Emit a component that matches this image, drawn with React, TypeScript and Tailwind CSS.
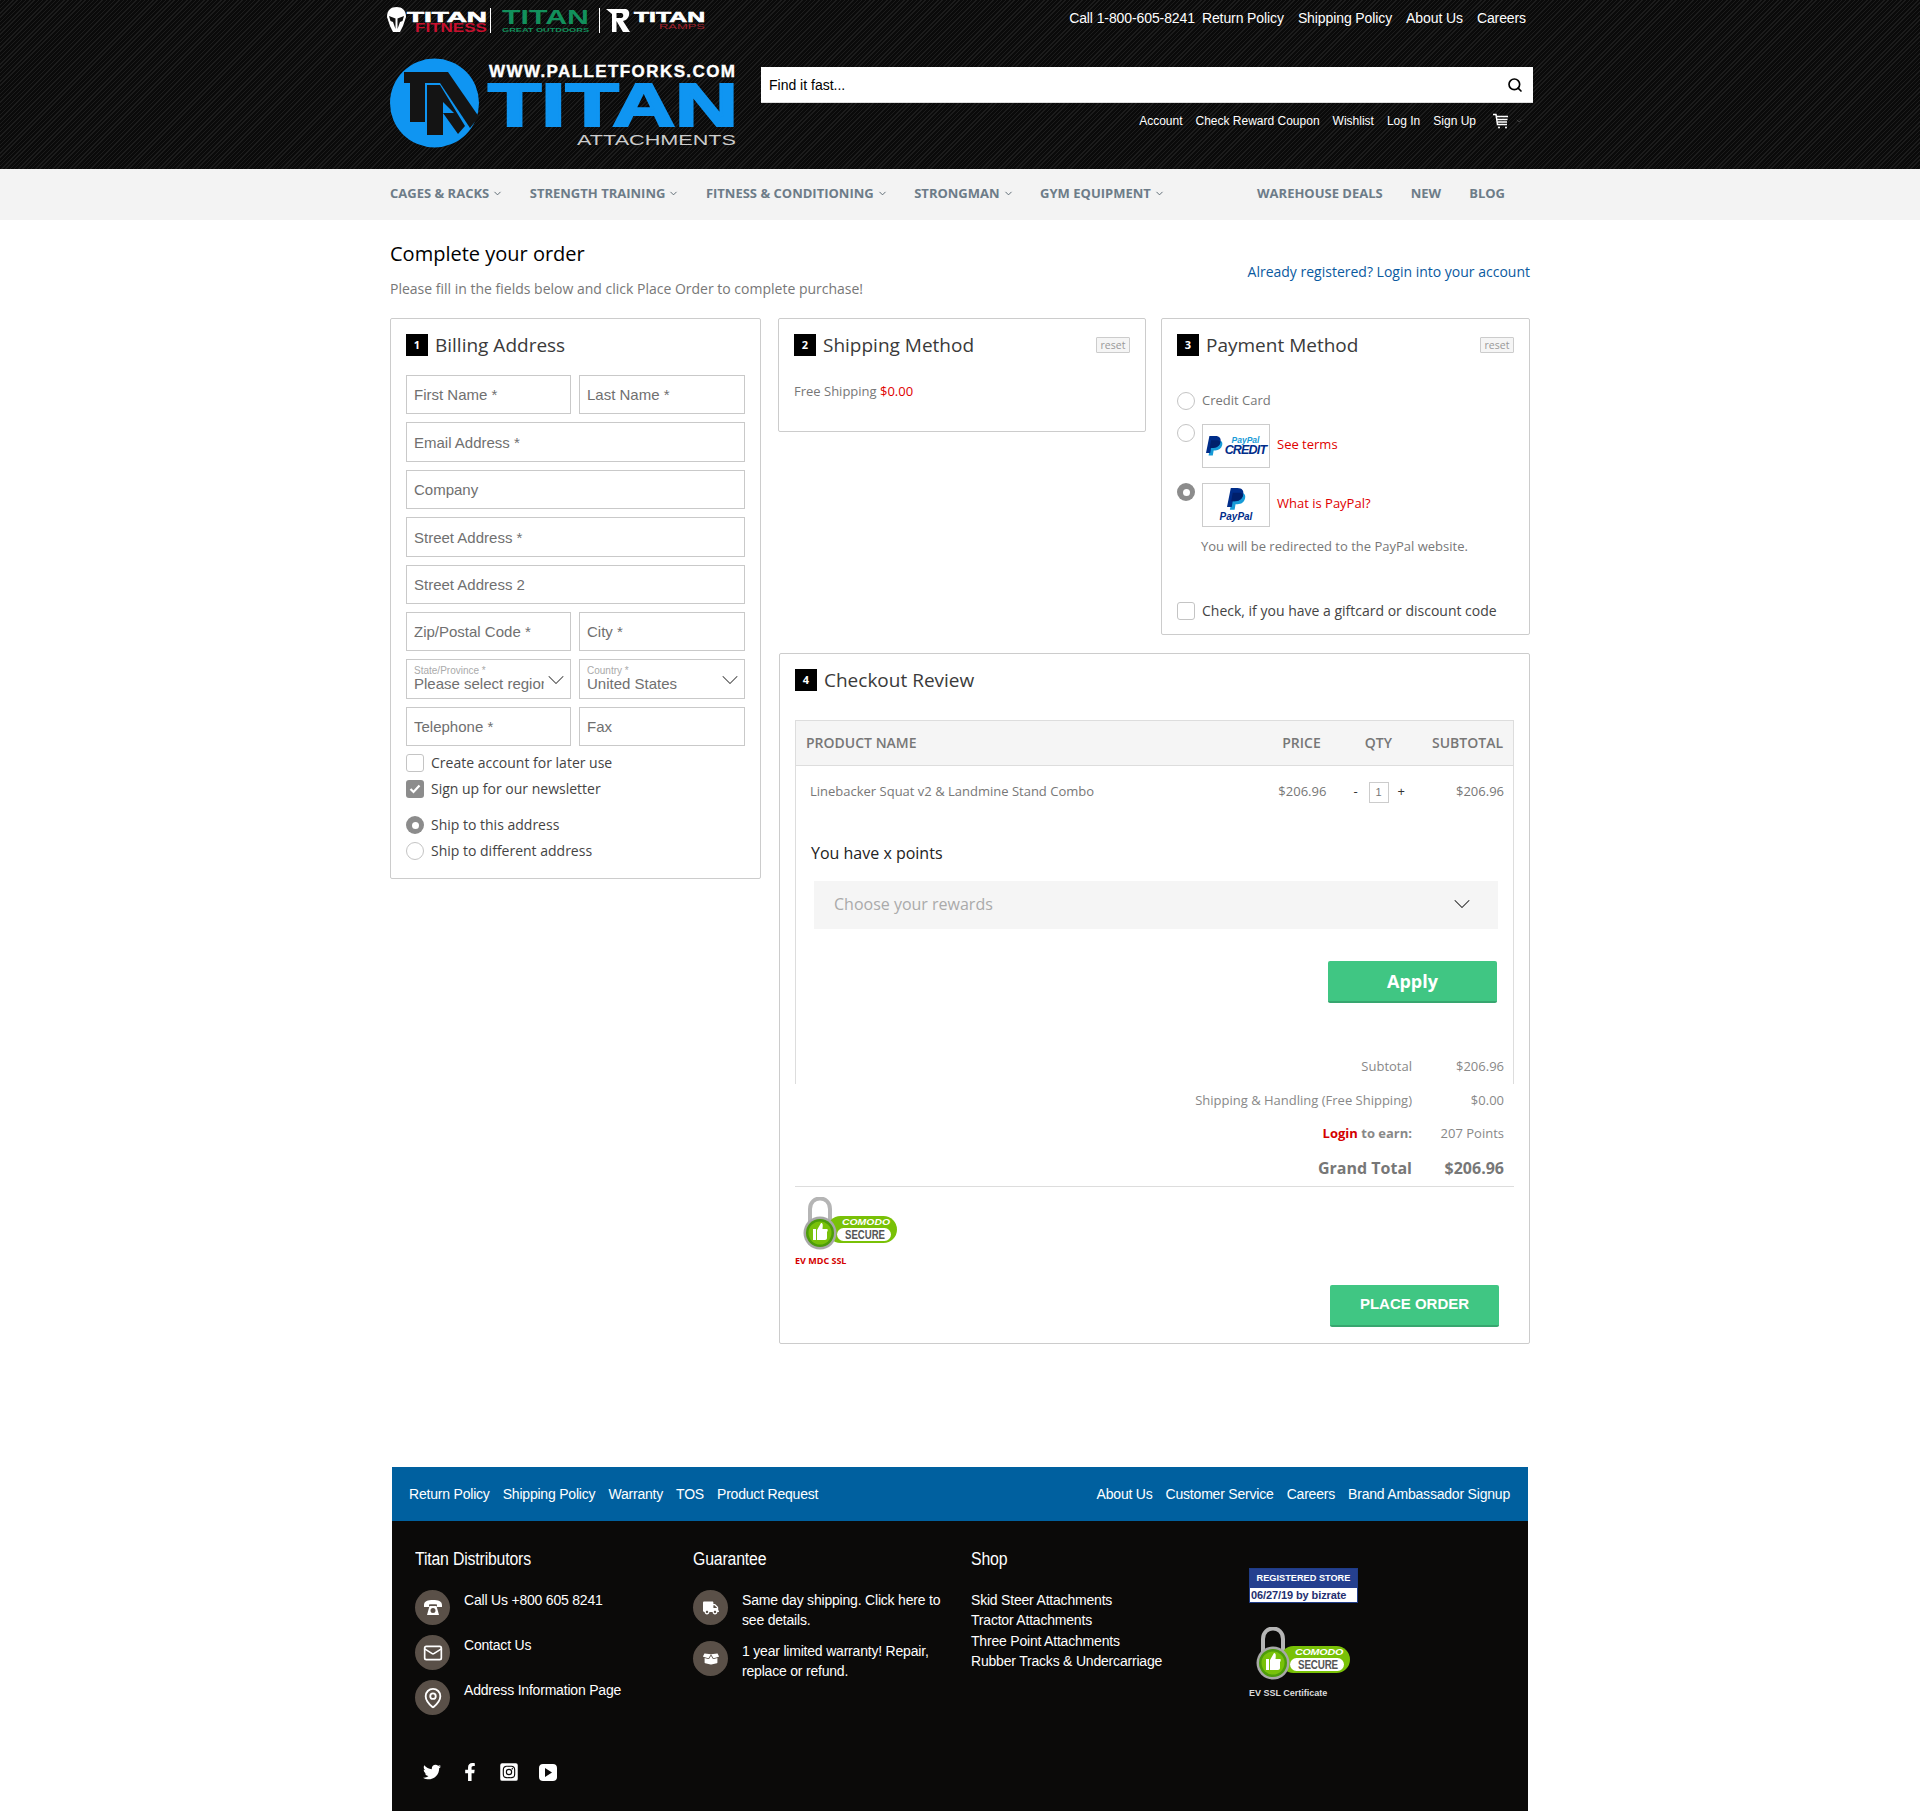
import React from "react";
import { ChevronDown, Search, Mail, MapPin } from "lucide-react";
import { FaTwitter, FaFacebookF, FaInstagramSquare, FaTruck, FaBoxOpen } from "react-icons/fa";

const OPEN = "font-['Open_Sans',sans-serif]";
const ARIAL = "font-['Liberation_Sans',Arial,sans-serif]";

const TopLogos = () => (
  <svg width="320" height="28" viewBox="0 0 320 28" className="block ml-[-3px]">
    {/* helmet */}
    <path d="M0 10 C0 3 4 0 9.500 0 C15 0 19 3 19 10 L16 19 L13 25 H6 L3 19 Z" fill="#fff" />
    <path d="M2 9 L8.500 11.500 V22 L6 15 L3.500 14 Z M17 9 L10.500 11.500 V22 L13 15 L15.500 14 Z" fill="#111" />
    <text x="20" y="15" textLength="80" lengthAdjust="spacingAndGlyphs" fontFamily="Liberation Sans" fontWeight="700" fontSize="15" fill="#fff" stroke="#fff" strokeWidth=".6">TITAN</text>
    <text x="28" y="25" textLength="72" lengthAdjust="spacingAndGlyphs" fontFamily="Liberation Sans" fontWeight="700" fontSize="13" fill="#c8102e">FITNESS</text>
    <rect x="103" y="1" width="1" height="25" fill="#fff" />
    <text x="115" y="17" textLength="87" lengthAdjust="spacingAndGlyphs" fontFamily="Liberation Sans" fontWeight="700" fontSize="20" fill="#12905c">TITAN</text>
    <text x="115" y="25" textLength="87" lengthAdjust="spacingAndGlyphs" fontFamily="Liberation Sans" fontWeight="700" fontSize="6" fill="#12905c">GREAT OUTDOORS</text>
    <rect x="212" y="1" width="1" height="25" fill="#fff" />
    <path d="M219 2 H238 C244 2 244 12 236 14 L243 25 H236 L229.500 14 V25 H225 V7 Z M229.500 6 V11 H234 C237 11 237 6 234 6 Z" fill="#fff" fillRule="evenodd" />
    <text x="247" y="15" textLength="71" lengthAdjust="spacingAndGlyphs" fontFamily="Liberation Sans" fontWeight="700" fontSize="15" fill="#fff" stroke="#fff" strokeWidth=".6">TITAN</text>
    <text x="272" y="22" textLength="46" lengthAdjust="spacingAndGlyphs" fontFamily="Liberation Sans" fontSize="8" fill="#a3212b">RAMPS</text>
  </svg>
);

const MainLogo = () => (
  <svg width="350" height="92" viewBox="0 0 350 92" className="block shrink-0">
    <circle cx="44.500" cy="45" r="44.500" fill="#0f95f2" />
    <path d="M14 14 H58 V25 H35 V64 H20 V25 H14 Z" fill="#141414" />
    <path d="M37 27 H50 L75 68 L68 76 L53 55 V77 H37 Z" fill="#141414" />
    <path d="M50 14 H58 L89 59 L80 70 L50 25 Z" fill="#141414" />
    <path d="M53 44 L64 55 H53 Z" fill="#0f95f2" />
    <text x="99" y="19" textLength="246" lengthAdjust="spacing" fontFamily="Liberation Sans" fontWeight="700" fontSize="17" fill="#fff" stroke="#fff" strokeWidth=".4">WWW.PALLETFORKS.COM</text>
    <text x="98" y="68" textLength="250" lengthAdjust="spacingAndGlyphs" fontFamily="Liberation Sans" fontWeight="700" fontSize="62" fill="#0f95f2" stroke="#0f95f2" strokeWidth="2.200">TITAN</text>
    <text x="187" y="87" textLength="159" lengthAdjust="spacingAndGlyphs" fontFamily="Liberation Sans" fontSize="15" fill="#ccc">ATTACHMENTS</text>
  </svg>
);

const Cart = () => (
  <svg width="16" height="16" viewBox="0 0 16 16" className="block" fill="none" stroke="#fff" strokeWidth="1.500">
    <path d="M0 1.500 H3 L4.500 11.500 H14" />
    <path d="M3.500 3.500 H15 M4 6.500 H14.500 M4.500 9 H14" />
    <circle cx="6" cy="14.500" r="1" fill="#fff" stroke="none" />
    <circle cx="13" cy="14.500" r="1" fill="#fff" stroke="none" />
  </svg>
);

const Header = () => (
  <header className="h-[169px] bg-[#0b0b0b] bg-[repeating-linear-gradient(135deg,#1c1c1c_0px,#1c1c1c_1px,#0a0a0a_1px,#0a0a0a_3px)]">
    <div className={`w-[1140px] mx-auto ${ARIAL}`}>
      <div className="h-[58px] pt-[7px] flex justify-between items-start">
        <TopLogos />
        <div className="flex gap-[14px] pr-[4px] pt-[2px] text-[14px] leading-[18px] tracking-[-0.1px] text-white">
          <span className="mr-[-7px]">Call 1-800-605-8241</span>
          <span>Return Policy</span>
          <span>Shipping Policy</span>
          <span>About Us</span>
          <span>Careers</span>
        </div>
      </div>
      <div className="flex">
        <MainLogo />
        <div className="ml-[21px] mr-[-3px] flex-1 pt-[9px]">
          <div className="h-[36px] bg-white border-b border-[#ddd] flex items-center justify-between pl-[8px] pr-[10px] text-[14px] text-black">
            <span className="pt-[2px]">Find it fast...</span>
            <Search size={16} strokeWidth={2.500} className="text-black" />
          </div>
          <div className="mt-[9px] h-[18px] flex justify-end items-center gap-[13px] pr-[10px] text-[12px] text-white">
            <span>Account</span>
            <span>Check Reward Coupon</span>
            <span>Wishlist</span>
            <span>Log In</span>
            <span>Sign Up</span>
            <div className="flex items-center gap-[6px] ml-[4px]">
              <Cart />
              <ChevronDown size={8} className="text-[#555]" />
            </div>
          </div>
        </div>
      </div>
    </div>
  </header>
);

const NavItem = ({ label }: { label: string }) => (
  <div className="flex items-center gap-[3px]">
    <span>{label}</span>
    <ChevronDown size={11} strokeWidth={2} className="text-[#55626c]" />
  </div>
);

const Nav = () => (
  <nav className="h-[51px] bg-[#f3f3f3]">
    <div className={`w-[1140px] h-full mx-auto pb-[2px] flex items-center text-[13px] font-bold text-[#6d7c88] ${OPEN}`}>
      <div className="flex gap-[26.500px]">
        <NavItem label="CAGES & RACKS" />
        <NavItem label="STRENGTH TRAINING" />
        <NavItem label="FITNESS & CONDITIONING" />
        <NavItem label="STRONGMAN" />
        <NavItem label="GYM EQUIPMENT" />
      </div>
      <div className="ml-auto flex gap-[28px] pr-[25px]">
        <span>WAREHOUSE DEALS</span>
        <span>NEW</span>
        <span>BLOG</span>
      </div>
    </div>
  </nav>
);

const StepTitle = ({ n, title, reset }: { n: number; title: string; reset?: boolean }) => (
  <div className="flex items-center h-[22px]">
    <div className="w-[22px] h-[22px] bg-black text-white text-[11px] font-bold flex items-center justify-center shrink-0">{n}</div>
    <span className="ml-[7px] text-[19px] text-[#3a3a3a] leading-[22px]">{title}</span>
    {reset && (
      <span className="ml-auto w-[34px] h-[16px] border border-[#ccc] bg-[#f5f5f5] rounded-[1px] text-[10.500px] leading-[14px] text-center text-[#999]">reset</span>
    )}
  </div>
);

const Field = ({ label, h = "h-[39px]" }: { label: string; h?: string }) => (
  <input
    placeholder={label}
    className={`w-full ${h} border border-[#c9c9c9] px-[7px] text-[15px] ${ARIAL} bg-white placeholder:text-[#707070] outline-none`}
  />
);

const SelectField = ({ label, value }: { label: string; value: string }) => (
  <div className={`relative h-[40px] border border-[#c9c9c9] pl-[7px] ${ARIAL}`}>
    <div className="pt-[6px] text-[10px] leading-[10px] text-[#aaa]">{label}</div>
    <div className="w-[130px] overflow-hidden whitespace-nowrap text-[15px] leading-[16px] text-[#707070]">{value}</div>
    <ChevronDown size={28} strokeWidth={0.900} className="absolute right-0 top-[6px] text-[#444]" />
  </div>
);

const CheckBox = ({ checked }: { checked?: boolean }) => (
  <div className={`w-[18px] h-[18px] rounded-[3px] shrink-0 flex items-center justify-center ${checked ? "bg-[#8c8c8c]" : "border border-[#c4c4c4] bg-white"}`}>
    {checked && (
      <svg width="12" height="10" viewBox="0 0 12 10" fill="none" stroke="#fff" strokeWidth="2.200">
        <path d="M1.500 5 L4.500 8 L10.500 1.500" />
      </svg>
    )}
  </div>
);

const Radio = ({ checked }: { checked?: boolean }) => (
  <div className={`w-[18px] h-[18px] rounded-full shrink-0 flex items-center justify-center ${checked ? "bg-[#8c8c8c]" : "border border-[#c4c4c4] bg-white"}`}>
    {checked && <div className="w-[7px] h-[7px] rounded-full bg-white" />}
  </div>
);

const Option = ({ children, label }: { children: React.ReactNode; label: string }) => (
  <div className="flex items-center gap-[7px] h-[18px] text-[14px] text-[#444]">
    {children}
    <span className="pb-[2px]">{label}</span>
  </div>
);

const Billing = () => (
  <section className="w-[371px] h-[561px] shrink-0 border border-[#ccc] rounded-[2px] px-[15px] pt-[15px]">
    <StepTitle n={1} title="Billing Address" />
    <div className="mt-[19px] flex flex-col gap-[8px]">
      <div className="grid grid-cols-[165px_166px] gap-[8px]">
        <Field label="First Name *" />
        <Field label="Last Name *" />
      </div>
      <Field label="Email Address *" h="h-[40px]" />
      <Field label="Company" />
      <Field label="Street Address *" h="h-[40px]" />
      <Field label="Street Address 2" />
      <div className="grid grid-cols-[165px_166px] gap-[8px]">
        <Field label="Zip/Postal Code *" />
        <Field label="City *" />
      </div>
      <div className="grid grid-cols-[165px_166px] gap-[8px]">
        <SelectField label="State/Province *" value="Please select region" />
        <SelectField label="Country *" value="United States" />
      </div>
      <div className="grid grid-cols-[165px_166px] gap-[8px]">
        <Field label="Telephone *" />
        <Field label="Fax" />
      </div>
    </div>
    <div className="mt-[8px] flex flex-col gap-[8px]">
      <Option label="Create account for later use"><CheckBox /></Option>
      <Option label="Sign up for our newsletter"><CheckBox checked /></Option>
    </div>
    <div className="mt-[18px] flex flex-col gap-[8px]">
      <Option label="Ship to this address"><Radio checked /></Option>
      <Option label="Ship to different address"><Radio /></Option>
    </div>
  </section>
);

const PayPalMark = ({ size }: { size: number }) => (
  <svg width={size} height={size * 1.2} viewBox="0 0 20 24" className="block shrink-0">
    <path d="M7 5 H14 C18 5 20 7 19 11 C18 15 15 17 11 17 H9 L8 23 H3 Z" fill="#179bd7" />
    <path d="M4 0 H11 C16 0 18 3 17 7 C16 12 12 14 8 14 H6 L5 20 H0 Z" fill="#002d8a" />
    <path d="M6 5 H14.500 C16 6 17 7 16.800 8 C16 12 12 14 8 14 H6 L4.500 14 Z" fill="#001f6b" />
  </svg>
);

const Shipping = () => (
  <section className="w-[368px] h-[114px] border border-[#ccc] rounded-[2px] px-[15px] pt-[15px]">
    <StepTitle n={2} title="Shipping Method" reset />
    <div className="mt-[25px] text-[13px] leading-[20px] text-[#777]">
      Free Shipping <span className="text-[#e00000]">$0.00</span>
    </div>
  </section>
);

const Payment = () => (
  <section className="ml-[15px] w-[369px] h-[317px] border border-[#ccc] rounded-[2px] px-[15px] pt-[15px]">
    <StepTitle n={3} title="Payment Method" reset />
    <div className="mt-[36px] flex items-center gap-[7px] h-[18px]">
      <Radio />
      <span className="text-[13px] text-[#777]">Credit Card</span>
    </div>
    <div className="mt-[14px] flex items-start gap-[7px]">
      <Radio />
      <div className="w-[68px] h-[44px] border border-[#ccc] flex items-center justify-center gap-[2px]">
        <PayPalMark size={17} />
        <div className="flex flex-col items-center leading-none">
          <span className={`text-[8.500px] italic font-bold text-[#179bd7] ${ARIAL}`}>PayPal</span>
          <span className={`text-[12.500px] font-bold italic tracking-[-0.8px] text-[#002d8a] ${ARIAL}`}>CREDIT</span>
        </div>
      </div>
      <span className="mt-[11px] text-[13px] leading-[18px] text-[#e00000]">See terms</span>
    </div>
    <div className="mt-[15px] flex items-start gap-[7px]">
      <Radio checked />
      <div className="w-[68px] h-[44px] border border-[#ccc] flex flex-col items-center justify-center">
        <PayPalMark size={19} />
        <span className={`text-[10px] leading-[11px] italic font-bold text-[#002d8a] ${ARIAL}`}>PayPal</span>
      </div>
      <span className="mt-[11px] text-[13px] leading-[18px] text-[#e00000]">What is PayPal?</span>
    </div>
    <div className="mt-[9px] ml-[24px] text-[13px] leading-[20px] text-[#777]">You will be redirected to the PayPal website.</div>
    <div className="mt-[46px] flex items-center gap-[7px] h-[18px]">
      <CheckBox />
      <span className="pb-[2px] text-[14px] text-[#444]">Check, if you have a giftcard or discount code</span>
    </div>
  </section>
);

const Comodo = () => (
  <svg width="94" height="53" viewBox="0 0 94 53" className="block">
    <path d="M7 26 V12 C7 -2 27 -2 27 12 V26" fill="none" stroke="#b5b5b5" strokeWidth="4" />
    <rect x="24" y="19" width="70" height="27" rx="13.500" fill="#79c107" />
    <rect x="34" y="31" width="54" height="13" rx="6.500" fill="#fff" />
    <circle cx="17" cy="36" r="16.500" fill="#a8a8a8" />
    <circle cx="17" cy="36" r="14" fill="#4d9c0b" />
    <circle cx="17" cy="36" r="11.500" fill="#78c10a" />
    <path d="M10 32 H13 V43 H10 Z M14 33 L18 26 C20 26 20 28 19.500 32 H24 C25 32 25 34 24 35 V41 C24 42 23 43 22 43 H14 Z" fill="#fff" />
    <text x="39" y="28" textLength="48" lengthAdjust="spacingAndGlyphs" fontFamily="Liberation Sans" fontWeight="700" fontStyle="italic" fontSize="9" fill="#fff">COMODO</text>
    <text x="42" y="42" textLength="40" lengthAdjust="spacingAndGlyphs" fontFamily="Liberation Sans" fontWeight="700" fontSize="12" fill="#555">SECURE</text>
  </svg>
);

const TotalRow = ({ children, value, cls = "" }: { children: React.ReactNode; value: string; cls?: string }) => (
  <div className={`h-[33.500px] flex justify-end items-center text-[13px] text-[#888] ${cls}`}>
    <div>{children}</div>
    <div className="w-[92px] text-right">{value}</div>
  </div>
);

const Review = () => (
  <section className="mt-[18px] ml-px w-[751px] h-[691px] border border-[#ccc] rounded-[2px] px-[15px] pt-[15px]">
    <StepTitle n={4} title="Checkout Review" />
    <div className="mt-[29px] h-[46px] pb-[2px] border border-[#ddd] bg-[#f5f5f5] flex items-center text-[14px] font-semibold text-[#777]">
      <span className="ml-[10px]">PRODUCT NAME</span>
      <span className="ml-auto">PRICE</span>
      <span className="ml-[44px]">QTY</span>
      <span className="ml-[40px] mr-[10px]">SUBTOTAL</span>
    </div>
    <div className="border-x border-[#ddd] h-[318px]">
      <div className="h-[52px] flex items-center text-[13px] text-[#777] pr-[9px]">
        <span className="ml-[14px]">Linebacker Squat v2 &amp; Landmine Stand Combo</span>
        <span className="ml-auto">$206.96</span>
        <span className="ml-[27px] text-[#333]">-</span>
        <span className={`ml-[11px] w-[20px] h-[21px] border border-[#ccc] text-center text-[11px] leading-[19px] ${ARIAL}`}>1</span>
        <span className="ml-[9px] text-[#333]">+</span>
        <span className="w-[99px] text-right">$206.96</span>
      </div>
      <div className="mt-[23px] ml-[15px] text-[16px] leading-[24px] text-[#222]">You have x points</div>
      <div className="mt-[16px] ml-[18px] mr-[15px] h-[48px] pb-[2px] bg-[#f5f5f5] flex items-center justify-between pl-[20px] pr-[22px] text-[16px] text-[#aaa]">
        <span>Choose your rewards</span>
        <ChevronDown size={28} strokeWidth={0.900} className="text-[#222]" />
      </div>
      <div className="mt-[32px] mr-[16px] flex justify-end">
        <button className="w-[169px] h-[42px] bg-[#40c683] border-b-2 border-[#37a66f] rounded-[2px] text-white text-[18px] font-bold">Apply</button>
      </div>
      <div className="mt-[47px] pr-[9px]">
        <TotalRow value="$206.96">Subtotal</TotalRow>
      </div>
    </div>
    <div className="pr-[10px]">
      <TotalRow value="$0.00">Shipping &amp; Handling (Free Shipping)</TotalRow>
      <TotalRow value="207 Points" cls="pb-[2px]">
        <span className="font-bold"><span className="text-[#d40000]">Login</span> to earn:</span>
      </TotalRow>
      <TotalRow value="$206.96" cls="!h-[34.500px] text-[16px] font-bold !text-[#777]">Grand Total</TotalRow>
    </div>
    <div className="border-t border-[#ddd] pt-[10px]">
      <div className="ml-[8px]"><Comodo /></div>
      <div className="mt-[5px] text-[9px] leading-[12px] font-bold text-[#d40000]">EV MDC SSL</div>
      <div className="mt-[18px] mr-[15px] flex justify-end">
        <button className={`w-[169px] h-[42px] bg-[#40c683] border-b-2 border-[#37a66f] rounded-[2px] text-white text-[15px] font-bold ${ARIAL}`}>PLACE ORDER</button>
      </div>
    </div>
  </section>
);

const OldPhone = () => (
  <svg width="18" height="16" viewBox="0 0 18 16" fill="#fff">
    <path d="M0 5 C0 1 4 0 9 0 C14 0 18 1 18 5 V7 H13 V4.500 C11 4 7 4 5 4.500 V7 H0 Z" />
    <path d="M5.500 6 H12.500 L15 15 H3 Z M9 8 A2.500 2.500 0 1 0 9 13 A2.500 2.500 0 1 0 9 8 Z" fillRule="evenodd" />
  </svg>
);

const YoutubeSquare = () => (
  <svg width="18" height="17" viewBox="0 0 18 17" className="block">
    <path d="M4 0 H14 C16.500 0 18 1.500 18 4 V13 C18 15.500 16.500 17 14 17 H4 C1.500 17 0 15.500 0 13 V4 C0 1.500 1.500 0 4 0 Z M6 4 V13 L13 8.500 Z" fill="#fff" fillRule="evenodd" />
  </svg>
);

const Circle = ({ children }: { children: React.ReactNode }) => (
  <div className="w-[35px] h-[35px] rounded-full bg-[#5a5048] shrink-0 flex items-center justify-center text-white">{children}</div>
);

const Heading = ({ children }: { children: React.ReactNode }) => (
  <h3 className={`h-[24px] text-[18px] leading-[24px] text-white origin-left scale-x-[0.88] ${ARIAL}`}>{children}</h3>
);

const Footer = () => (
  <footer className={`w-[1136px] mx-auto mt-[123px] mb-[2px] text-white text-[14px] tracking-[-0.2px] ${ARIAL}`}>
    <div className="h-[54px] bg-[#00609f] flex items-center justify-between pl-[17px] pr-[18px]">
      <div className="flex gap-[13px]">
        <span>Return Policy</span>
        <span>Shipping Policy</span>
        <span>Warranty</span>
        <span>TOS</span>
        <span>Product Request</span>
      </div>
      <div className="flex gap-[13px]">
        <span>About Us</span>
        <span>Customer Service</span>
        <span>Careers</span>
        <span>Brand Ambassador Signup</span>
      </div>
    </div>
    <div className="h-[290px] bg-[#0b0a09] pl-[23px] grid grid-cols-[278px_278px_278px_1fr]">
      <div className="pt-[26px]">
        <Heading>Titan Distributors</Heading>
        <div className="mt-[19px] flex flex-col gap-[10px]">
          <div className="flex gap-[14px] leading-[20px]"><Circle><OldPhone /></Circle><span>Call Us +800 605 8241</span></div>
          <div className="flex gap-[14px] leading-[20px]"><Circle><Mail size={20} strokeWidth={2} /></Circle><span>Contact Us</span></div>
          <div className="flex gap-[14px] leading-[20px]"><Circle><MapPin size={22} strokeWidth={2} /></Circle><span>Address Information Page</span></div>
        </div>
        <div className="mt-[47px] ml-[8px] flex items-center gap-[20px] text-[18px]">
          <FaTwitter />
          <FaFacebookF />
          <FaInstagramSquare size={20} />
          <YoutubeSquare />
        </div>
      </div>
      <div className="pt-[26px]">
        <Heading>Guarantee</Heading>
        <div className="mt-[19px] flex flex-col gap-[11px]">
          <div className="flex gap-[14px] leading-[20px]"><Circle><FaTruck size={16} /></Circle><span className="w-[205px]">Same day shipping. Click here to see details.</span></div>
          <div className="flex gap-[14px] leading-[20px]"><Circle><FaBoxOpen size={16} /></Circle><span className="w-[205px]">1 year limited warranty! Repair, replace or refund.</span></div>
        </div>
      </div>
      <div className="pt-[26px]">
        <Heading>Shop</Heading>
        <div className="mt-[19px] leading-[20.400px]">
          <div>Skid Steer Attachments</div>
          <div>Tractor Attachments</div>
          <div>Three Point Attachments</div>
          <div>Rubber Tracks &amp; Undercarriage</div>
        </div>
      </div>
      <div className="pt-[47px]">
        <div className="w-[109px] h-[35px] bg-white border border-[#1f3c88] flex flex-col">
          <div className="w-full h-[19px] bg-[#25408f] text-[9.200px] font-bold leading-[19px] text-center text-white tracking-normal">REGISTERED STORE</div>
          <div className="pl-[1px] text-[11px] font-bold leading-[14px] text-[#1f2f70] tracking-[-0.1px] whitespace-nowrap">06/27/19 by bizrate</div>
        </div>
        <div className="mt-[24px] ml-[7px]"><Comodo /></div>
        <div className="mt-[7px] text-[9px] leading-[12px] font-bold tracking-normal text-[#ddd]">EV SSL Certificate</div>
      </div>
    </div>
  </footer>
);

const App = () => {
  return (
    <div className={`bg-white ${OPEN}`}>
      <Header />
      <Nav />
      <main className="w-[1140px] mx-auto">
        <div className="flex justify-between items-start h-[98px]">
          <div>
            <h1 className="mt-[20px] text-[20px] leading-[28px] text-black">Complete your order</h1>
            <p className="mt-[11px] text-[14px] leading-[20px] text-[#777]">Please fill in the fields below and click Place Order to complete purchase!</p>
          </div>
          <a className="mt-[42px] text-[14px] leading-[20px] text-[#0a5aa0]">Already registered? Login into your account</a>
        </div>
        <div className="flex items-start gap-[17px]">
          <Billing />
          <div className="w-[752px]">
            <div className="flex items-start">
              <Shipping />
              <Payment />
            </div>
            <Review />
          </div>
        </div>
      </main>
      <Footer />
    </div>
  );
};

export default App;
